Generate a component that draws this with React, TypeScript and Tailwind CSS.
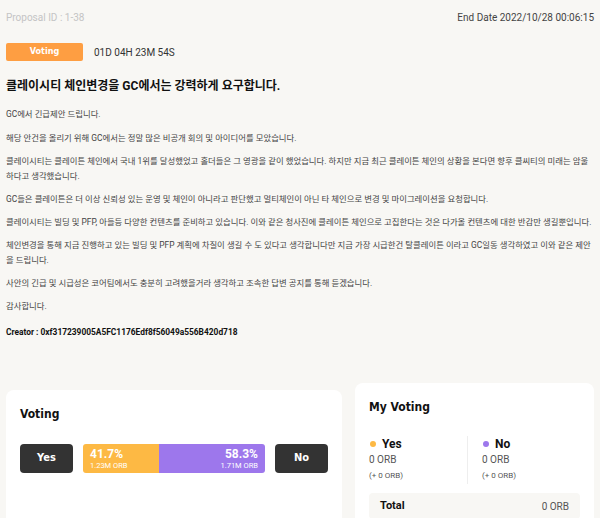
export default function App() {
  const body = [
    'GC에서 긴급제안 드립니다.',
    '해당 안건을 올리기 위해 GC에서는 정말 많은 비공개 회의 및 아이디어를 모았습니다.',
    '클레이시티는 클레이튼 체인에서 국내 1위를 달성했었고 홀더들은 그 영광을 같이 했었습니다. 하지만 지금 최근 클레이튼 체인의 상황을 본다면 향후 클씨티의 미래는 암울하다고 생각했습니다.',
    'GC들은 클레이튼은 더 이상 신뢰성 있는 운영 및 체인이 아니라고 판단했고 멀티체인이 아닌 타 체인으로 변경 및 마이그레이션을 요청합니다.',
    '클레이시티는 빌딩 및 PFP, 아들등 다양한 컨텐츠를 준비하고 있습니다. 이와 같은 청사진에 클레이튼 체인으로 고집한다는 것은 다가올 컨텐츠에 대한 반감만 생길뿐입니다.',
    '체인변경을 통해 지금 진행하고 있는 빌딩 및 PFP 계획에 차질이 생길 수 도 있다고 생각합니다만 지금 가장 시급한건 탈클레이튼 이라고 GC일동 생각하였고 이와 같은 제안을 드립니다.',
    '사안의 긴급 및 시급성은 코어팀에서도 충분히 고려했을거라 생각하고 조속한 답변 공지를 통해 듣겠습니다.',
    '감사합니다.',
  ]

  return (
    <div
      className="min-h-[518px] w-[600px] overflow-hidden bg-[#f8f7f4] px-[6px] text-[#444]"
      style={{ fontFamily: "Roboto, 'Noto Sans CJK KR', sans-serif" }}
    >
      <div className="flex items-center justify-between pt-[11px] text-[10px] leading-[14px]">
        <span className="text-[#c4c4c4]">Proposal ID : 1-38</span>
        <span className="text-[#444]">End Date 2022/10/28 00:06:15</span>
      </div>

      <div className="mt-[18px] flex items-center gap-[11px]">
        <span
          className="flex h-[18px] w-[77px] items-center justify-center rounded-[2px] bg-[#fe9e42] text-[9px] font-bold text-white"
          style={{ fontFamily: "'DejaVu Sans Condensed', sans-serif" }}
        >
          Voting
        </span>
        <span className="text-[10px] text-[#333]">01D 04H 23M 54S</span>
      </div>

      <h1 className="mt-[15px] text-[12px] leading-[20px] font-bold text-[#111]">
        클레이시티 체인변경을 GC에서는 강력하게 요구합니다.
      </h1>

      <div className="mt-[11px] flex flex-col gap-[8px] text-[8.4px] leading-[15px] text-[#444]">
        {body.map((p, i) => (
          <p key={i} className={i === 1 ? 'mt-[1px]' : ''}>
            {p}
          </p>
        ))}
        <p className="mt-[3px] font-bold text-[#111]">Creator : 0xf317239005A5FC1176Edf8f56049a556B420d718</p>
      </div>

      <div className="mt-[43px] flex items-start gap-[13px]">
        <div className="mt-[7px] h-[140px] w-[336px] rounded-t-[8px] bg-white px-[14px] pt-[17px]">
          <h2
            className="text-[12px] leading-[14px] font-bold text-[#111]"
            style={{ fontFamily: "'DejaVu Sans Condensed', sans-serif" }}
          >
            Voting
          </h2>
          <div className="mt-[23px] flex items-center gap-[10px]">
            <button
              className="flex h-[29px] w-[53px] items-center justify-center rounded-[4px] bg-[#333] text-[11px] font-bold text-white"
              style={{ fontFamily: "'DejaVu Sans Condensed', sans-serif" }}
            >
              Yes
            </button>
            <div className="flex h-[29px] w-[182px] overflow-hidden rounded-[3px] text-white">
              <div className="flex w-[41.7%] flex-col justify-center bg-[#fdb944] pl-[7px]">
                <span className="text-[12px] leading-[13px] font-bold">41.7%</span>
                <span className="text-[7.5px] leading-[9px]">1.23M ORB</span>
              </div>
              <div className="flex flex-1 flex-col items-end justify-center bg-[#9d77ec] pr-[7px]">
                <span className="text-[12px] leading-[13px] font-bold">58.3%</span>
                <span className="text-[7.5px] leading-[9px]">1.71M ORB</span>
              </div>
            </div>
            <button
              className="flex h-[29px] w-[53px] items-center justify-center rounded-[4px] bg-[#333] text-[11px] font-bold text-white"
              style={{ fontFamily: "'DejaVu Sans Condensed', sans-serif" }}
            >
              No
            </button>
          </div>
        </div>

        <div className="h-[140px] w-[240px] rounded-t-[8px] bg-white px-[14px] pt-[17px]">
          <h2
            className="text-[12px] leading-[14px] font-bold text-[#111]"
            style={{ fontFamily: "'DejaVu Sans Condensed', sans-serif" }}
          >
            My Voting
          </h2>
          <div className="mt-[22px] flex">
            <div className="flex-1">
              <div className="flex items-center gap-[6px]">
                <span className="ml-[1px] h-[6px] w-[6px] rounded-full bg-[#fdb944]" />
                <span className="text-[12px] leading-[16px] font-bold text-[#111]">Yes</span>
              </div>
              <div className="text-[10px] leading-[16px] text-[#555]">0 ORB</div>
              <div className="text-[8px] leading-[16px] text-[#555]">(+ 0 ORB)</div>
            </div>
            <div className="w-px bg-[#eee]" />
            <div className="flex-1 pl-[14px]">
              <div className="flex items-center gap-[6px]">
                <span className="ml-[1px] h-[6px] w-[6px] rounded-full bg-[#9d77ec]" />
                <span className="text-[12px] leading-[16px] font-bold text-[#111]">No</span>
              </div>
              <div className="text-[10px] leading-[16px] text-[#555]">0 ORB</div>
              <div className="text-[8px] leading-[16px] text-[#555]">(+ 0 ORB)</div>
            </div>
          </div>
          <div className="mt-[9px] flex h-[26px] items-center justify-between rounded-[4px] bg-[#f8f7f4] px-[11px]">
            <span className="text-[11px] font-bold text-[#111]">Total</span>
            <span className="text-[10px] text-[#555]">0 ORB</span>
          </div>
        </div>
      </div>
    </div>
  )
}
